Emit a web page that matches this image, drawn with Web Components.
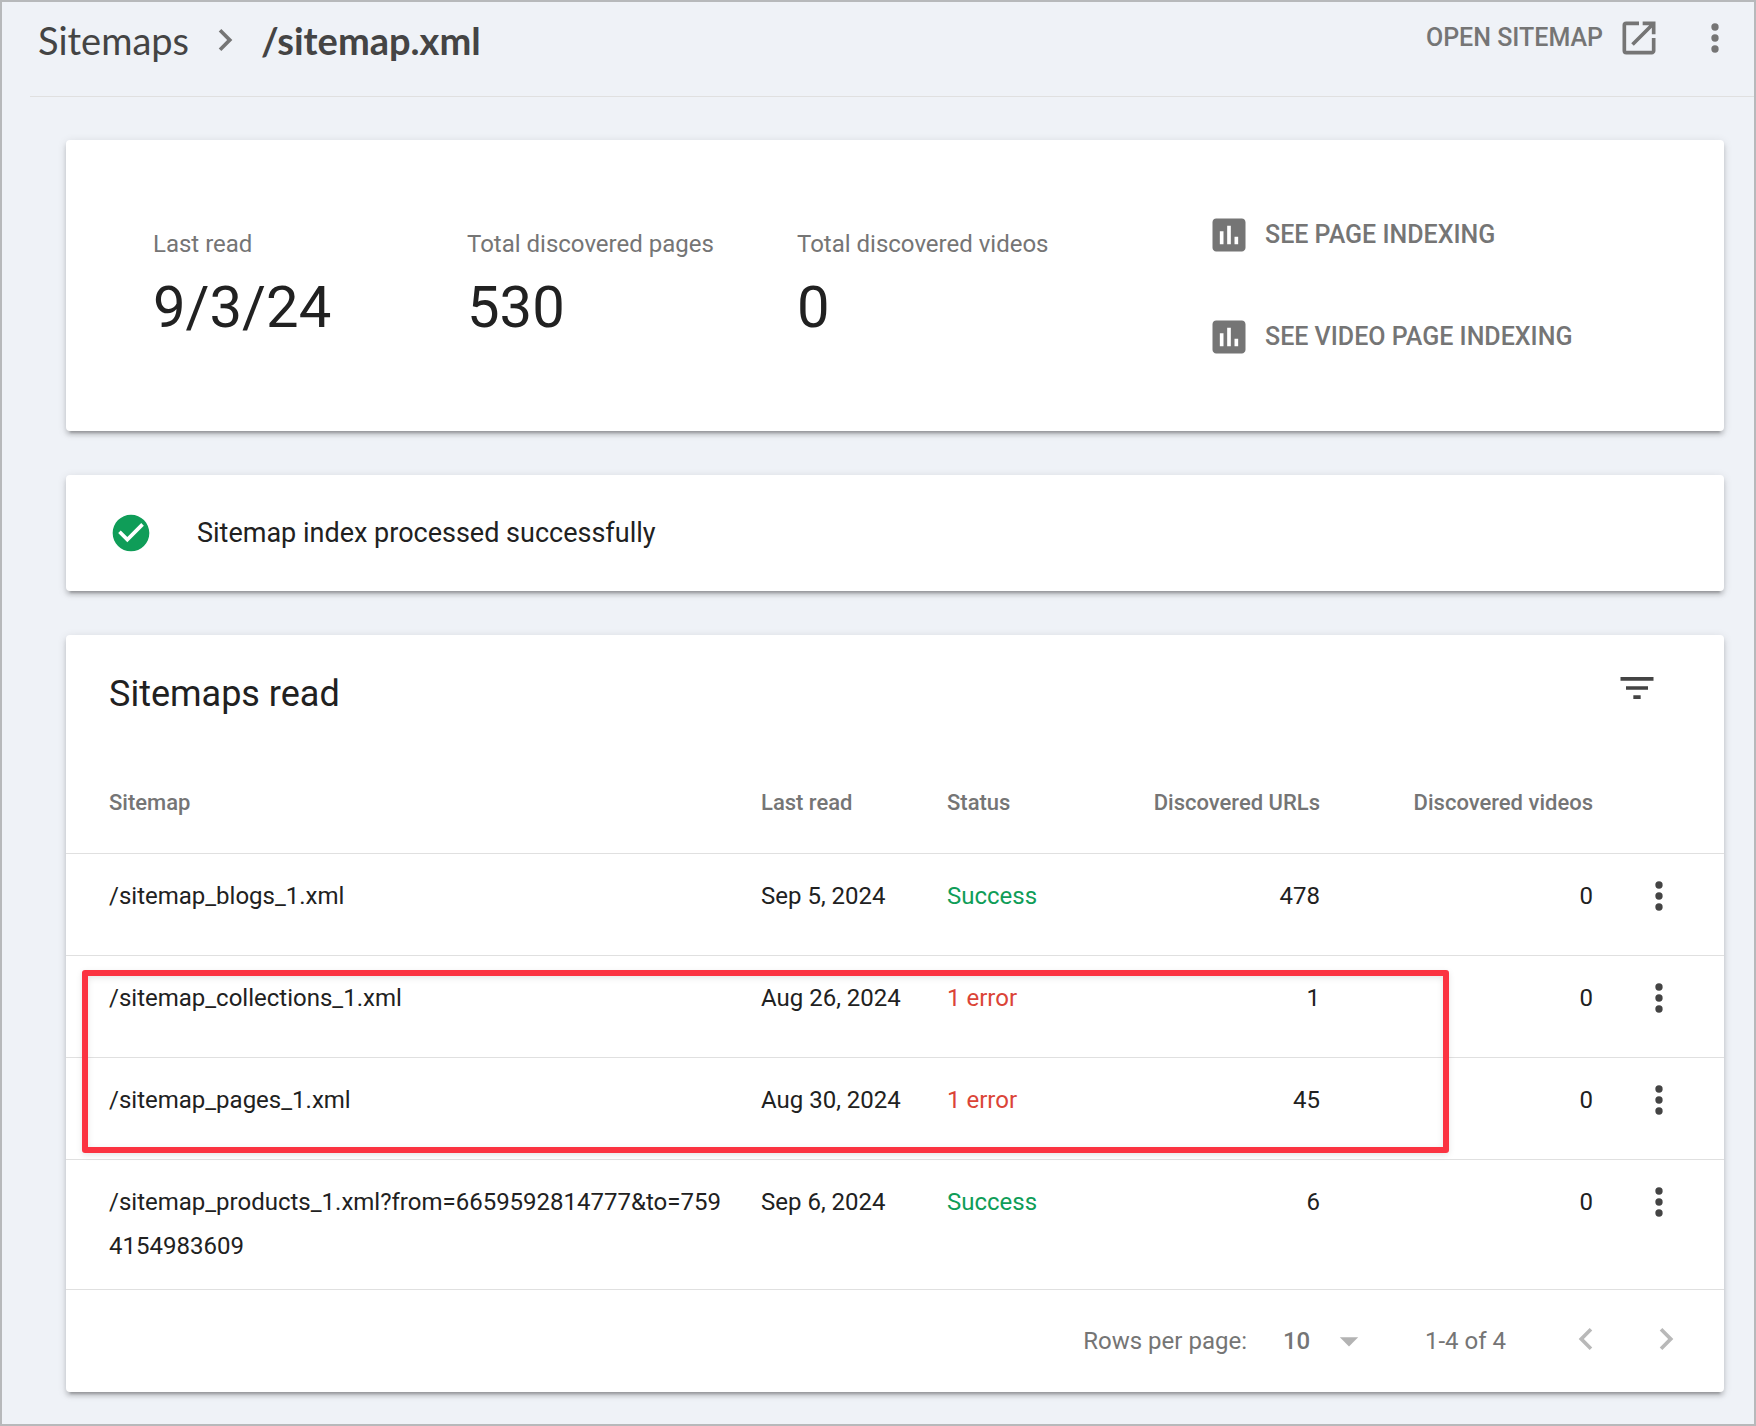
<!DOCTYPE html>
<html lang="en">
<head>
<meta charset="utf-8">
<meta name="viewport" content="width=device-width, initial-scale=1">
<title>Sitemaps - /sitemap.xml</title>
<style>
    :root {
        --page:#eff2f7;
        --frame:#b7b9bb;
        --line:#e0e0e0;
        --text:#212121;
        --muted:#757575;
        --icon:#444;
        --green:#0f9d58;
        --red:#db4437;
        --mark:#fb3341;
    }
    * { box-sizing:border-box; }
    body {
        margin:0;
        min-height:100vh;
        background:var(--page);
        border:2px solid var(--frame);
        color:var(--text);
        font-family:Roboto, "Liberation Sans", sans-serif;
        font-size:24px;
        line-height:44px;
    }
    main {
        display:flex;
        flex-direction:column;
        gap:44px;
        padding:43px 30px 32px 64px;
    }
</style>
</head>
<body>
    <sitemap-header></sitemap-header>
    <main>
        <surface-card><sitemap-summary></sitemap-summary></surface-card>
        <surface-card><status-banner>Sitemap index processed successfully</status-banner></surface-card>
        <surface-card>
            <sitemap-table></sitemap-table>
            <table-pager></table-pager>
        </surface-card>
    </main>

<script>
// ===== ICONS =====
const ICONS = {
    chevron: '<path d="M10 6 8.59 7.41 13.17 12l-4.58 4.59L10 18l6-6z"/>',
    back: '<path d="M15.41 7.41 14 6l-6 6 6 6 1.41-1.41L10.83 12z"/>',
    more: '<circle cx="12" cy="6" r="2"/><circle cx="12" cy="12" r="2"/><circle cx="12" cy="18" r="2"/>',
    open: '<path d="M19 19H5V5h7V3H5a2 2 0 0 0-2 2v14a2 2 0 0 0 2 2h14c1.1 0 2-.9 2-2v-7h-2v7zM14 3v2h3.59l-9.83 9.83 1.41 1.41L19 6.41V10h2V3h-7z"/>',
    chart: '<path d="M19 3H5c-1.1 0-2 .9-2 2v14c0 1.1.9 2 2 2h14c1.1 0 2-.9 2-2V5c0-1.1-.9-2-2-2zM9 17H7v-7h2v7zm4 0h-2V7h2v10zm4 0h-2v-4h2v4z"/>',
    check: '<path d="M12 2C6.48 2 2 6.48 2 12s4.48 10 10 10 10-4.48 10-10S17.52 2 12 2zm-2 15-5-5 1.41-1.41L10 14.17l7.59-7.59L19 8l-9 9z"/>',
    filter: '<path d="M10 18h4v-2h-4v2zM3 6v2h18V6H3zm3 7h12v-2H6v2z"/>',
    down: '<path d="m7 10 5 5 5-5z"/>'
};

customElements.define('ui-icon', class extends HTMLElement {
    connectedCallback() {
        this.attachShadow({ mode: 'open' });
        this.shadowRoot.innerHTML = `
            <style>
                :host { display:block; flex:none; width:44px; height:44px; }
                svg { display:block; width:100%; height:100%; fill:currentColor; }
            </style>
            <svg viewBox="0 0 24 24" aria-hidden="true">${ICONS[this.getAttribute('name')]}</svg>
        `;
    }
});

// ===== CARD =====
customElements.define('surface-card', class extends HTMLElement {
    connectedCallback() {
        this.attachShadow({ mode: 'open' });
        this.shadowRoot.innerHTML = `
            <style>
                :host {
                    display:block;
                    background:#fff;
                    border-radius:4px;
                    box-shadow:0 4px 4px rgba(0,0,0,0.14), 0 2px 10px rgba(0,0,0,0.12), 0 6px 2px -4px rgba(0,0,0,0.2);
                }
            </style>
            <slot></slot>
        `;
    }
});

// ===== HEADER =====
customElements.define('sitemap-header', class extends HTMLElement {
    connectedCallback() {
        this.attachShadow({ mode: 'open' });
        this.shadowRoot.innerHTML = `
            <style>
                :host { display:block; }
                header {
                    display:flex;
                    justify-content:space-between;
                    align-items:flex-start;
                    margin-left:28px;
                    padding:14px 17px 34px 8px;
                    border-bottom:1px solid var(--line);
                }
                nav {
                    display:flex;
                    align-items:center;
                    gap:14px;
                    padding-top:2px;
                    font-family:Lato, Roboto, sans-serif;
                    font-size:38px;
                    color:var(--icon);
                }
                nav a { color:inherit; text-decoration:none; }
                nav ui-icon { color:var(--muted); }
                h1 { margin:0; font-size:inherit; font-weight:700; }
                .actions { display:flex; gap:32px; color:var(--muted); }
                .open {
                    display:flex;
                    gap:14px;
                    color:inherit;
                    font-size:25px;
                    font-weight:500;
                    text-decoration:none;
                    text-transform:uppercase;
                }
                button { border:0; padding:0; background:none; color:inherit; cursor:pointer; }
            </style>
            <header>
                <nav aria-label="Breadcrumb">
                    <a href="#sitemaps">Sitemaps</a>
                    <ui-icon name="chevron"></ui-icon>
                    <h1>/sitemap.xml</h1>
                </nav>
                <div class="actions">
                    <a class="open" href="#open">Open sitemap<ui-icon name="open"></ui-icon></a>
                    <button type="button" aria-label="More options"><ui-icon name="more"></ui-icon></button>
                </div>
            </header>
        `;
    }
});

// ===== SUMMARY =====
customElements.define('summary-metric', class extends HTMLElement {
    connectedCallback() {
        this.attachShadow({ mode: 'open' });
        this.shadowRoot.innerHTML = `
            <style>
                :host { display:block; padding-top:15px; }
                .label { color:var(--muted); line-height:32px; }
                .value { margin-top:15px; font-size:58px; line-height:64px; }
            </style>
            <div class="label">${this.getAttribute('label')}</div>
            <div class="value"><slot></slot></div>
        `;
    }
});

customElements.define('sitemap-summary', class extends HTMLElement {
    connectedCallback() {
        this.attachShadow({ mode: 'open' });
        this.shadowRoot.innerHTML = `
            <style>
                :host {
                    display:grid;
                    grid-template-columns:314fr 330fr 410fr 430fr;
                    padding:73px 87px 72px;
                }
                .links { display:flex; flex-direction:column; gap:58px; }
                .links a {
                    display:flex;
                    gap:14px;
                    color:var(--muted);
                    font-size:25px;
                    font-weight:500;
                    text-decoration:none;
                    text-transform:uppercase;
                    white-space:nowrap;
                }
            </style>
            <summary-metric label="Last read">9/3/24</summary-metric>
            <summary-metric label="Total discovered pages">530</summary-metric>
            <summary-metric label="Total discovered videos">0</summary-metric>
            <div class="links">
                <a href="#pages"><ui-icon name="chart"></ui-icon>See page indexing</a>
                <a href="#videos"><ui-icon name="chart"></ui-icon>See video page indexing</a>
            </div>
        `;
    }
});

// ===== STATUS =====
customElements.define('status-banner', class extends HTMLElement {
    connectedCallback() {
        this.attachShadow({ mode: 'open' });
        this.shadowRoot.innerHTML = `
            <style>
                :host { display:flex; align-items:center; gap:44px; padding:36px 43px; font-size:27px; }
                ui-icon { color:var(--green); }
            </style>
            <ui-icon name="check"></ui-icon>
            <span><slot></slot></span>
        `;
    }
});

// ===== TABLE =====
const SITEMAPS = [
    { path: '/sitemap_blogs_1.xml', read: 'Sep 5, 2024', status: 'Success', urls: 478, videos: 0 },
    { path: '/sitemap_collections_1.xml', read: 'Aug 26, 2024', status: '1 error', urls: 1, videos: 0 },
    { path: '/sitemap_pages_1.xml', read: 'Aug 30, 2024', status: '1 error', urls: 45, videos: 0 },
    { path: '/sitemap_products_1.xml?from=6659592814777&amp;to=7594154983609', read: 'Sep 6, 2024', status: 'Success', urls: 6, videos: 0 }
];

customElements.define('sitemap-table', class extends HTMLElement {
    connectedCallback() {
        const rows = SITEMAPS.map(s => `
            <tr>
                <td>${s.path}</td>
                <td>${s.read}</td>
                <td class="${s.status === 'Success' ? 'ok' : 'error'}">${s.status}</td>
                <td class="num">${s.urls}</td>
                <td class="num">${s.videos}</td>
                <td class="menu"><button type="button" aria-label="Row options"><ui-icon name="more"></ui-icon></button></td>
            </tr>`).join('');
        this.attachShadow({ mode: 'open' });
        this.shadowRoot.innerHTML = `
            <style>
                :host { display:block; }
                .head {
                    display:flex;
                    justify-content:space-between;
                    align-items:flex-start;
                    padding:31px 65px 29px 43px;
                }
                h2 { margin:0; font-size:36px; font-weight:400; line-height:56px; }
                button { display:block; border:0; padding:0; background:none; color:var(--icon); cursor:pointer; }
                .wrap { position:relative; }
                table { width:100%; table-layout:fixed; border-collapse:separate; border-spacing:0; }
                th, td {
                    height:102px;
                    padding:20px 0 21px;
                    border-bottom:1px solid var(--line);
                    text-align:left;
                    vertical-align:top;
                    box-sizing:border-box;
                }
                th { padding:2px 0 0; height:103px; vertical-align:middle; color:var(--muted); font-size:22px; font-weight:500; }
                th:first-child, td:first-child { padding-left:43px; padding-right:36px; word-break:break-all; }
                .read { width:186px; }
                .status { width:150px; }
                .urls { width:223px; }
                .videos { width:273px; }
                .options { width:131px; }
                .num { text-align:right; }
                .ok { color:var(--green); }
                .error { color:var(--red); }
                .menu button { margin:0 auto; }
                .highlight {
                    position:absolute;
                    top:219px;
                    left:16px;
                    right:275px;
                    height:183px;
                    border:6px solid var(--mark);
                    border-radius:3px;
                    box-shadow:0 2px 6px rgba(0,0,0,0.1), inset 0 2px 6px rgba(0,0,0,0.1);
                    box-sizing:border-box;
                    pointer-events:none;
                }
            </style>
            <div class="head">
                <h2>Sitemaps read</h2>
                <button type="button" aria-label="Filter rows"><ui-icon name="filter"></ui-icon></button>
            </div>
            <div class="wrap">
                <table>
                    <thead>
                        <tr>
                            <th>Sitemap</th>
                            <th class="read">Last read</th>
                            <th class="status">Status</th>
                            <th class="urls num">Discovered URLs</th>
                            <th class="videos num">Discovered videos</th>
                            <th class="options"></th>
                        </tr>
                    </thead>
                    <tbody>${rows}</tbody>
                </table>
                <div class="highlight"></div>
            </div>
        `;
    }
});

// ===== PAGER =====
customElements.define('table-pager', class extends HTMLElement {
    connectedCallback() {
        this.attachShadow({ mode: 'open' });
        this.shadowRoot.innerHTML = `
            <style>
                :host {
                    display:flex;
                    justify-content:flex-end;
                    align-items:center;
                    padding:27px 36px;
                    color:var(--muted);
                }
                .select { position:relative; width:88px; margin:0 54px 0 36px; }
                select {
                    display:block;
                    width:100%;
                    height:44px;
                    border:0;
                    padding:0;
                    appearance:none;
                    background:none;
                    color:inherit;
                    font:inherit;
                    font-weight:500;
                }
                .select ui-icon { position:absolute; top:0; right:0; color:#b3b3b3; pointer-events:none; }
                .steps { display:flex; gap:36px; margin-left:58px; padding-bottom:4px; }
                button { display:block; border:0; padding:0; background:none; color:#b9b9b9; }
            </style>
            <label for="rows">Rows per page:</label>
            <div class="select">
                <select id="rows">
                    <option>10</option>
                    <option>25</option>
                    <option>50</option>
                </select>
                <ui-icon name="down"></ui-icon>
            </div>
            <span>1-4 of 4</span>
            <div class="steps">
                <button type="button" aria-label="Previous page" disabled><ui-icon name="back"></ui-icon></button>
                <button type="button" aria-label="Next page" disabled><ui-icon name="chevron"></ui-icon></button>
            </div>
        `;
    }
});
</script>
</body>
</html>
